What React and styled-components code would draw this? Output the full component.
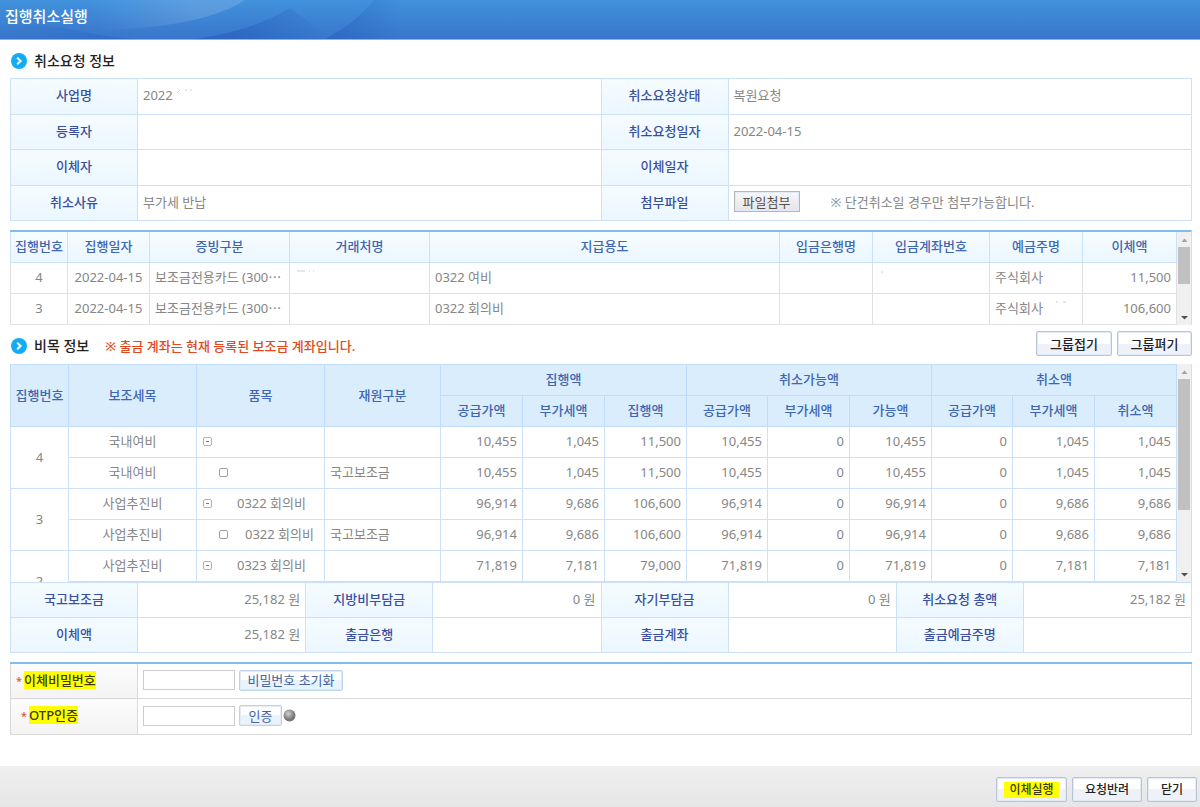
import React from "react";
import styled, { createGlobalStyle, css } from "styled-components";

const Global = createGlobalStyle`
  * { box-sizing: border-box; }
  html, body { margin: 0; background: #fff; }
  body, button, input {
    font-family: "Noto Sans", "Noto Sans CJK KR", sans-serif;
    font-size: 13px;
    line-height: 18px;
  }
  body { color: #868686; }
`;

const Page = styled.div`
  display: flex;
  flex-direction: column;
  min-height: 100vh;
`;

const TitleBar = styled.header`
  position: relative;
  height: 40px;
  padding: 6px 5px;
  overflow: hidden;
  background: linear-gradient(#4191dc, #3976cb);
  border-bottom: 1px solid #8fb0e0;
  svg { position: absolute; inset: 0 auto auto 0; }
  h1 {
    position: relative;
    margin: 0;
    font-size: 15px;
    line-height: 20px;
    font-weight: 500;
    color: #fff;
  }
`;

const Content = styled.main`
  flex: 1;
  padding: 0 8px 30px 10px;
`;

const Heading = styled.div`
  display: flex;
  align-items: center;
  height: ${(p) => p.$h};
  padding-top: ${(p) => p.$top};
  h2 {
    margin: 0 0 0 7px;
    font-size: 14px;
    font-weight: 500;
    color: #222;
  }
  svg { margin-left: 1px; }
`;

const Notice = styled.p`
  flex: 1;
  margin: 0 0 0 16px;
  font-weight: 500;
  color: #e2481d;
`;

const Table = styled.table`
  width: 100%;
  height: ${(p) => p.$h || "auto"};
  table-layout: fixed;
  border-collapse: collapse;
  th, td {
    height: ${(p) => p.$row || "35px"};
    padding: 0 5px 2px;
    border: 1px solid ${(p) => p.$line || "#cbe1f9"};
    text-align: left;
    white-space: nowrap;
    overflow: hidden;
  }
`;

const Label = styled.th`
  && { text-align: center; }
  font-weight: 500;
  color: #3a4fa0;
  background: linear-gradient(#f5fcff, #ebf6ff);
`;

const Amount = styled.td`
  && { text-align: right; }
`;

const Panel = styled.div`
  display: flex;
  height: ${(p) => p.$h};
  overflow: hidden;
  border-right: 1px solid ${(p) => p.$line};
  ${(p) => p.$bar && css`border-top: 2px solid #7fbdf3; margin-top: 9px;`}
`;

const Viewport = styled.div`
  flex: 1;
  overflow: hidden;
`;

const ListTable = styled(Table)`
  border-top-style: hidden;
  thead th {
    height: 30px;
    padding: 0 0 2px;
    text-align: center;
    font-weight: 500;
    color: #3f66b0;
    background: linear-gradient(#f6fcff, #ebf6ff);
    border-color: #cbe1f9;
  }
`;

const BudgetTable = styled(Table)`
  thead th {
    padding: 0 0 2px;
    text-align: center;
    font-weight: 500;
    color: #3f66b0;
    background: #daedfd;
    border-color: #bfdcf8;
  }
`;

const Cell = styled.td`
  && { text-align: ${(p) => p.$align || "left"}; }
`;

const TreeCell = styled.td`
  && { padding: 0 0 2px ${(p) => (p.$leaf ? "22px" : "6px")}; }
  svg { vertical-align: 0; }
  span { margin-left: ${(p) => (p.$leaf ? "17px" : "25px")}; }
`;

const Track = styled.div`
  display: flex;
  flex-direction: column;
  align-items: center;
  width: 14px;
  background: #f0f0f0;
`;

const Thumb = styled.div`
  width: 12px;
  height: ${(p) => p.$size};
  margin-bottom: auto;
  background: #c1c1c1;
`;

const Button = styled.button`
  display: inline-block;
  height: 25px;
  min-width: ${(p) => p.$w};
  padding: 0;
  border: 1px solid #b9c4da;
  border-radius: 2px;
  color: #222;
  font-weight: 500;
  background: linear-gradient(#fff 50%, #eef1f8 50%);
  box-shadow: 0 0 0 1px #e3e9f5 inset;
`;

const GroupActions = styled.div`
  display: flex;
  gap: 5px;
  margin: -4px 0 0 auto;
`;

const FileButton = styled(Button)`
  height: 21px;
  border-color: #b5b5bd;
  border-radius: 0;
  color: #55504c;
  font-weight: 400;
  line-height: 16px;
  background: linear-gradient(#f8f8fa, #e4e4ea);
`;

const FileHint = styled.span`
  margin-left: 31px;
`;

const SmallButton = styled(Button)`
  height: 21px;
  border-color: #bcd3ee;
  color: #44629f;
  font-weight: 400;
  line-height: 16px;
  background: linear-gradient(#fff 50%, #e9f3fd 50%);
`;

const AuthTable = styled(Table)`
  margin-top: 9px;
  border-top: 2px solid #7fbdf3;
`;

const AuthLabel = styled.th`
  font-weight: 500;
  color: #3b3a0a;
  background: linear-gradient(#fcfcfc, #f3f3f3);
  && { text-align: left; padding-left: ${(p) => p.$indent}; }
  i { color: #e05840; font-size: 11px; font-style: normal; margin-right: 2px; }
`;

const Mark = styled.span`
  display: inline-block;
  background: #ffff00;
  color: #3b3a0a;
`;

const AuthRow = styled.div`
  display: flex;
  align-items: center;
  gap: 4px;
  svg { margin-left: -3px; }
`;

const Input = styled.input`
  width: 92px;
  height: 20px;
  padding: 0 4px;
  border: 1px solid #ccc;
  background: #fff;
`;

const Footer = styled.footer`
  display: flex;
  justify-content: flex-end;
  gap: 5px;
  height: 41px;
  padding: 11px 3px 0;
  background: linear-gradient(#efefef, #e6e6e6);
  button { font-size: 12px; }
  ${Mark} { padding: 0 5px; line-height: 16px; }
`;

const Arrow = () => (
  <svg width="16" height="16" viewBox="0 0 16 16" aria-hidden="true">
    <circle cx="8" cy="8" r="8" fill="#12acf5" />
    <path d="M6.2 4.8 9.6 8l-3.4 3.2" fill="none" stroke="#fff" strokeWidth="2" />
  </svg>
);

const TreeIcon = ({ open }) => (
  <svg width="9" height="9" viewBox="0 0 9 9" aria-hidden="true">
    <rect x=".5" y=".5" width="8" height="8" rx="1.5" fill="#fff" stroke={open ? "#b5b0ac" : "#a49c96"} />
    {open && <path d="M3 4.5h3" stroke="#777" />}
  </svg>
);

const ScrollBar = ({ size }) => (
  <Track>
    <svg width="15" height="15" viewBox="0 0 15 15" aria-hidden="true">
      <path d="M4.5 10 7.5 6.5l3 3.5z" fill="#a3a3a3" />
    </svg>
    <Thumb $size={size} />
    <svg width="15" height="15" viewBox="0 0 15 15" aria-hidden="true">
      <path d="M4 6h7L7.5 9.500z" fill="#505050" />
    </svg>
  </Track>
);

const Specks = ({ d }) => (
  <svg width="24" height="12" viewBox="0 0 24 12" aria-hidden="true">
    <path d={d} fill="none" stroke="#cfcfcf" />
  </svg>
);

const Cols = ({ widths }) => (
  <colgroup>
    {widths.map((w, i) => (
      <col key={i} style={w ? { width: w } : undefined} />
    ))}
  </colgroup>
);

const info = [
  ["사업명", <>2022 <Specks d="M1 5l3-3M9 2h2M14 2h2" /></>, "취소요청상태", "복원요청"],
  ["등록자", "", "취소요청일자", "2022-04-15"],
  ["이체자", "", "이체일자", ""],
  [
    "취소사유",
    "부가세 반납",
    "첨부파일",
    <>
      <FileButton type="button" $w="66px">파일첨부</FileButton>
      <FileHint>※ 단건취소일 경우만 첨부가능합니다.</FileHint>
    </>,
  ],
];

const listHead = ["집행번호", "집행일자", "증빙구분", "거래처명", "지급용도", "입금은행명", "입금계좌번호", "예금주명", "이체액"];
const listRows = [
  ["4", "0322 여비", "11,500"],
  ["3", "0322 회의비", "106,600"],
];

const budget = [
  { no: "4", kind: "국내여비", item: "", v: ["10,455", "1,045", "11,500", "10,455", "0", "10,455", "0", "1,045", "1,045"] },
  { no: "4", leaf: true, kind: "국내여비", item: "", v: ["10,455", "1,045", "11,500", "10,455", "0", "10,455", "0", "1,045", "1,045"] },
  { no: "3", kind: "사업추진비", item: "0322 회의비", v: ["96,914", "9,686", "106,600", "96,914", "0", "96,914", "0", "9,686", "9,686"] },
  { no: "3", leaf: true, kind: "사업추진비", item: "0322 회의비", v: ["96,914", "9,686", "106,600", "96,914", "0", "96,914", "0", "9,686", "9,686"] },
  { no: "2", kind: "사업추진비", item: "0323 회의비", v: ["71,819", "7,181", "79,000", "71,819", "0", "71,819", "0", "7,181", "7,181"] },
];

const totals = [
  [["국고보조금", "25,182 원"], ["지방비부담금", "0 원"], ["자기부담금", "0 원"], ["취소요청 총액", "25,182 원"]],
  [["이체액", "25,182 원"], ["출금은행", ""], ["출금계좌", ""], ["출금예금주명", ""]],
];

export default function App() {
  return (
    <Page>
      <Global />
      <TitleBar>
        <svg width="480" height="39" viewBox="0 0 480 39" aria-hidden="true">
          <defs>
            <linearGradient id="sweep" gradientUnits="userSpaceOnUse" x1="100" y1="36" x2="190" y2="0">
              <stop offset="0" stopColor="#fff" stopOpacity="0" />
              <stop offset="1" stopColor="#fff" stopOpacity=".14" />
            </linearGradient>
            <linearGradient id="shadeLeft" gradientUnits="userSpaceOnUse" x1="230" y1="0" x2="330" y2="0">
              <stop offset="0" stopColor="#1c55b4" stopOpacity=".45" />
              <stop offset="1" stopColor="#1c55b4" stopOpacity="0" />
            </linearGradient>
            <linearGradient id="shadeRight" gradientUnits="userSpaceOnUse" x1="330" y1="0" x2="400" y2="0">
              <stop offset="0" stopColor="#1c55b4" stopOpacity=".4" />
              <stop offset="1" stopColor="#1c55b4" stopOpacity="0" />
            </linearGradient>
            <linearGradient id="shadeEdge" gradientUnits="userSpaceOnUse" x1="0" y1="0" x2="130" y2="0">
              <stop offset="0" stopColor="#1c55b4" stopOpacity="0" />
              <stop offset="1" stopColor="#1c55b4" stopOpacity=".3" />
            </linearGradient>
          </defs>
          <path d="M195 39Q250 32 290 8L332 39z" fill="url(#shadeLeft)" />
          <path d="M325 39Q355 24 374 0H402V39z" fill="url(#shadeRight)" />
          <path d="M0 39V26Q50 24 80 31Q105 37 135 39z" fill="url(#shadeEdge)" />
          <path d="M0 0H245Q215 20 150 27Q100 32 60 26Q30 22 0 26z" fill="url(#sweep)" />
        </svg>
        <h1>집행취소실행</h1>
      </TitleBar>
      <Content>
        <Heading $h="38px" $top="4px">
          <Arrow />
          <h2>취소요청 정보</h2>
        </Heading>
        <Table $h="143px">
          <Cols widths={[127, null, 127, null]} />
          <tbody>
            {info.map(([a, b, c, d]) => (
              <tr key={a}>
                <Label scope="row">{a}</Label>
                <td>{b}</td>
                <Label scope="row">{c}</Label>
                <td>{d}</td>
              </tr>
            ))}
          </tbody>
        </Table>

        <Panel $h="95px" $line="#ddd" $bar>
          <Viewport>
            <ListTable $row="31px" $line="#e0e0e0">
              <Cols widths={[57, 82, 140, 140, null, 93, 117, 93, 94]} />
              <thead>
                <tr>{listHead.map((h) => <th key={h} scope="col">{h}</th>)}</tr>
              </thead>
              <tbody>
                {listRows.map(([no, use, amt]) => (
                  <tr key={no}>
                    <Cell $align="center">{no}</Cell>
                    <Cell $align="center">2022-04-15</Cell>
                    <td>보조금전용카드 (300⋯</td>
                    <td>{no === "4" && <Specks d="M2 1h8M14 1h1M18 1h1" />}</td>
                    <td>{use}</td>
                    <td />
                    <td>{no === "4" && <Specks d="M3 2h2" />}</td>
                    <td>주식회사 {no === "3" && <Specks d="M10 1h2M17 1h3" />}</td>
                    <Amount>{amt}</Amount>
                  </tr>
                ))}
              </tbody>
            </ListTable>
          </Viewport>
          <ScrollBar size="37px" />
        </Panel>

        <Heading $h="39px" $top="2px">
          <Arrow />
          <h2>비목 정보</h2>
          <Notice>※ 출금 계좌는 현재 등록된 보조금 계좌입니다.</Notice>
          <GroupActions>
            <Button type="button" $w="76px">그룹접기</Button>
            <Button type="button" $w="75px">그룹펴기</Button>
          </GroupActions>
        </Heading>

        <Panel $h="218px" $line="#cbe1f9">
          <Viewport>
            <BudgetTable $row="31px">
              <Cols widths={[58, 128, 128, null, 82, 82, 82, 81, 82, 82, 81, 82, 82]} />
              <thead>
                <tr>
                  {["집행번호", "보조세목", "품목", "재원구분"].map((h) => <th key={h} rowSpan={2} scope="col">{h}</th>)}
                  {["집행액", "취소가능액", "취소액"].map((h) => <th key={h} colSpan={3} scope="colgroup">{h}</th>)}
                </tr>
                <tr>
                  {["공급가액", "부가세액", "집행액", "공급가액", "부가세액", "가능액", "공급가액", "부가세액", "취소액"].map((h, i) => (
                    <th key={i} scope="col">{h}</th>
                  ))}
                </tr>
              </thead>
              <tbody>
                {budget.map((r, n) => (
                  <tr key={n}>
                    {!r.leaf && <Cell $align="center" rowSpan={2}>{r.no}</Cell>}
                    <Cell $align="center">{r.kind}</Cell>
                    <TreeCell $leaf={r.leaf}>
                      <TreeIcon open={!r.leaf} />
                      <span>{r.item}</span>
                    </TreeCell>
                    <td>{r.leaf ? "국고보조금" : ""}</td>
                    {r.v.map((v, i) => <Amount key={i}>{v}</Amount>)}
                  </tr>
                ))}
                <tr>
                  <td colSpan={12} />
                </tr>
              </tbody>
            </BudgetTable>
          </Viewport>
          <ScrollBar size="131px" />
        </Panel>

        <Table>
          <Cols widths={[127, null, 127, null, 127, null, 127, null]} />
          <tbody>
            {totals.map((row, i) => (
              <tr key={i}>
                {row.map(([k, v]) => (
                  <React.Fragment key={k}>
                    <Label scope="row">{k}</Label>
                    <Amount>{v}</Amount>
                  </React.Fragment>
                ))}
              </tr>
            ))}
          </tbody>
        </Table>

        <AuthTable $h="73px" $line="#d9d9d9">
          <Cols widths={[127, null]} />
          <tbody>
            <tr>
              <AuthLabel scope="row" $indent="5px">
                <i>*</i><Mark as="label" htmlFor="transfer-pw">이체비밀번호</Mark>
              </AuthLabel>
              <td>
                <AuthRow>
                  <Input id="transfer-pw" type="password" />
                  <SmallButton type="button" $w="104px">비밀번호 초기화</SmallButton>
                </AuthRow>
              </td>
            </tr>
            <tr>
              <AuthLabel scope="row" $indent="10px">
                <i>*</i><Mark as="label" htmlFor="otp">OTP인증</Mark>
              </AuthLabel>
              <td>
                <AuthRow>
                  <Input id="otp" type="text" />
                  <SmallButton type="button" $w="43px">인증</SmallButton>
                  <svg width="13" height="13" viewBox="0 0 13 13" role="img" aria-label="미인증">
                    <defs>
                      <radialGradient id="ball" cx=".4" cy=".35">
                        <stop offset="0" stopColor="#d0d0d0" />
                        <stop offset="1" stopColor="#777" />
                      </radialGradient>
                    </defs>
                    <circle cx="6.5" cy="6.5" r="6" fill="url(#ball)" />
                  </svg>
                </AuthRow>
              </td>
            </tr>
          </tbody>
        </AuthTable>
      </Content>
      <Footer>
        <Button type="button" $w="71px"><Mark>이체실행</Mark></Button>
        <Button type="button" $w="70px">요청반려</Button>
        <Button type="button" $w="50px">닫기</Button>
      </Footer>
    </Page>
  );
}
